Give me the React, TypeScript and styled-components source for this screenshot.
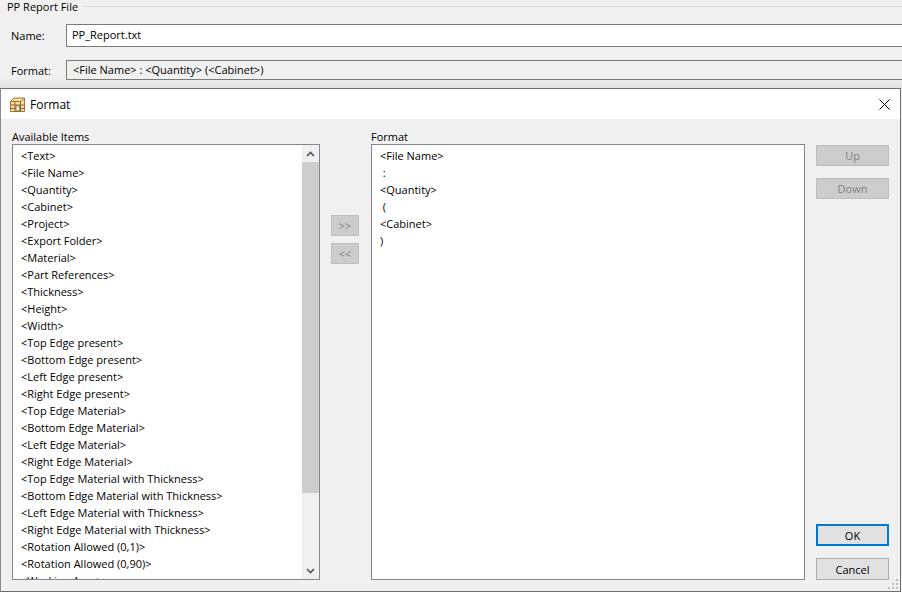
import { createGlobalStyle, styled } from "styled-components";

const GlobalStyle = createGlobalStyle`
  html, body {
    margin: 0;
    padding: 0;
    background: #f0f0f0;
    overflow: hidden;
  }
  body {
    font-family: "Open Sans", "Noto Sans", sans-serif;
    font-size: 11px;
    color: #000;
  }
`;

const Page = styled.div`
  width: 902px;
  height: 592px;
  display: flex;
  flex-direction: column;
  overflow: hidden;
`;

const Group = styled.div`
  height: 88px;
  flex: none;
  padding-left: 7px;
  box-sizing: border-box;
  background: linear-gradient(#f0f0f0 78px, #e2e2e2 88px);
`;

const GroupTitle = styled.div`
  display: flex;
  align-items: center;
  gap: 5px;
  height: 12px;
  &::after {
    content: "";
    flex: 1;
    border-top: 1px solid #dcdcdc;
  }
`;

const FieldRow = styled.div<{ $top: number }>`
  display: flex;
  align-items: center;
  margin-top: ${(p) => p.$top}px;
  padding-left: 4px;
`;

const FieldLabel = styled.label`
  width: 55px;
  flex: none;
`;

const NameInput = styled.div`
  flex: 1;
  height: 23px;
  line-height: 20px;
  box-sizing: border-box;
  padding-left: 5px;
  background: #fff;
  border: 1px solid #7a7a7a;
  border-right: none;
`;

const FormatInput = styled(NameInput)`
  height: 20px;
  line-height: 17px;
  padding-left: 6px;
  background: #f0f0f0;
`;

const Dialog = styled.div`
  flex: 1;
  min-height: 0;
  margin-right: 1px;
  position: relative;
  display: flex;
  flex-direction: column;
  background: #f0f0f0;
  border: 1px solid #6e6e6e;
  border-left-color: #8a8a8a;
`;

const TitleBar = styled.div`
  height: 30px;
  flex: none;
  display: flex;
  align-items: center;
  gap: 4px;
  padding-left: 8px;
  background: #fff;
  font-size: 12px;
`;

const CloseButton = styled.button`
  margin-left: auto;
  width: 30px;
  height: 30px;
  margin-right: 1px;
  padding: 0;
  border: none;
  background: none;
  display: flex;
  align-items: center;
  justify-content: center;
`;

const Body = styled.div`
  flex: 1;
  min-height: 0;
  display: flex;
  padding: 10px 12px 11px 11px;
`;

const ListColumn = styled.div<{ $width: number }>`
  width: ${(p) => p.$width}px;
  flex: none;
  display: flex;
  flex-direction: column;
`;

const ListLabel = styled.div`
  height: 15px;
  line-height: 15px;
`;

const ListBox = styled.div`
  flex: 1;
  min-height: 0;
  display: flex;
  background: #fff;
  border: 1px solid #828790;
  overflow: hidden;
`;

const Items = styled.div`
  flex: 1;
  min-width: 0;
  overflow: hidden;
  padding: 2px 0 0 8px;
`;

const Item = styled.div`
  height: 17px;
  line-height: 17px;
  white-space: nowrap;
`;

const ScrollBar = styled.div`
  width: 17px;
  flex: none;
  display: flex;
  flex-direction: column;
  background: #f0f0f0;
`;

const ScrollArrow = styled.div`
  height: 17px;
  flex: none;
  display: flex;
  align-items: center;
  justify-content: center;
`;

const ScrollTrack = styled.div`
  flex: 1;
  min-height: 0;
`;

const ScrollThumb = styled.div`
  height: 331px;
  background: #cdcdcd;
`;

const MoveColumn = styled.div`
  width: 28px;
  flex: none;
  margin: 0 12px 0 11px;
  padding-top: 86px;
  display: flex;
  flex-direction: column;
  gap: 7px;
`;

const SideColumn = styled.div`
  width: 73px;
  flex: none;
  margin-left: 11px;
  padding-top: 16px;
  display: flex;
  flex-direction: column;
`;

const PushButton = styled.button<{ $default?: boolean; $tall?: boolean }>`
  width: 100%;
  height: ${(p) => (p.$tall ? 22 : 21)}px;
  flex: none;
  padding: 0;
  box-sizing: border-box;
  font: inherit;
  color: #000;
  background: #e1e1e1;
  border: ${(p) => (p.$default ? "2px solid #0078d7" : "1px solid #adadad")};
`;

const DisabledButton = styled(PushButton).attrs({ disabled: true })`
  color: #838383;
  background: #cccccc;
  border: 1px solid #bfbfbf;
`;

const Spacer = styled.div<{ $size?: number }>`
  flex: ${(p) => (p.$size ? "none" : 1)};
  height: ${(p) => p.$size ?? 0}px;
`;

const Grip = styled.svg`
  position: absolute;
  right: 1px;
  bottom: 1px;
`;

const available = [
  "<Text>",
  "<File Name>",
  "<Quantity>",
  "<Cabinet>",
  "<Project>",
  "<Export Folder>",
  "<Material>",
  "<Part References>",
  "<Thickness>",
  "<Height>",
  "<Width>",
  "<Top Edge present>",
  "<Bottom Edge present>",
  "<Left Edge present>",
  "<Right Edge present>",
  "<Top Edge Material>",
  "<Bottom Edge Material>",
  "<Left Edge Material>",
  "<Right Edge Material>",
  "<Top Edge Material with Thickness>",
  "<Bottom Edge Material with Thickness>",
  "<Left Edge Material with Thickness>",
  "<Right Edge Material with Thickness>",
  "<Rotation Allowed (0,1)>",
  "<Rotation Allowed (0,90)>",
  "<Working Area>",
];

const selected = ["<File Name>", " :", "<Quantity>", " (", "<Cabinet>", ")"];

const PreItem = styled(Item)`
  white-space: pre;
`;

function TableIcon() {
  return (
    <svg width="17" height="17" viewBox="0 0 17 17">
      <path d="M1.5 5.5 L5 2 H15.5 V15.5 H1.5 Z" fill="#f6dc9a" stroke="#a8733a" />
      <path d="M1.5 5.5 H12 L15.5 2" fill="none" stroke="#a8733a" />
      <path d="M1.5 9 H15.5 M1.5 12.5 H15.5 M6 5.5 V15.5 M11.5 5.5 V15.5" stroke="#8f6a3a" />
      <rect x="7" y="10" width="3.5" height="5" fill="#fff4cf" stroke="#6e5a36" strokeWidth="0.7" />
    </svg>
  );
}

export default function App() {
  return (
    <Page>
      <GlobalStyle />
      <Group>
        <GroupTitle>PP Report File</GroupTitle>
        <FieldRow $top={12}>
          <FieldLabel>Name:</FieldLabel>
          <NameInput>PP_Report.txt</NameInput>
        </FieldRow>
        <FieldRow $top={13}>
          <FieldLabel>Format:</FieldLabel>
          <FormatInput>{"<File Name> : <Quantity> (<Cabinet>)"}</FormatInput>
        </FieldRow>
      </Group>
      <Dialog>
        <TitleBar>
          <TableIcon />
          Format
          <CloseButton aria-label="Close">
            <svg width="11" height="11" viewBox="0 0 11 11">
              <path d="M0.5 0.5 L10.5 10.5 M10.5 0.5 L0.5 10.5" stroke="#000" strokeWidth="1" />
            </svg>
          </CloseButton>
        </TitleBar>
        <Body>
          <ListColumn $width={308}>
            <ListLabel>Available Items</ListLabel>
            <ListBox>
              <Items>
                {available.map((item) => (
                  <Item key={item}>{item}</Item>
                ))}
              </Items>
              <ScrollBar>
                <ScrollArrow>
                  <svg width="9" height="6" viewBox="0 0 9 6">
                    <path d="M1 5 L4.5 1.5 L8 5" fill="none" stroke="#505050" strokeWidth="1.6" />
                  </svg>
                </ScrollArrow>
                <ScrollTrack>
                  <ScrollThumb />
                </ScrollTrack>
                <ScrollArrow>
                  <svg width="9" height="6" viewBox="0 0 9 6">
                    <path d="M1 1 L4.5 4.5 L8 1" fill="none" stroke="#505050" strokeWidth="1.6" />
                  </svg>
                </ScrollArrow>
              </ScrollBar>
            </ListBox>
          </ListColumn>
          <MoveColumn>
            <DisabledButton>{">>"}</DisabledButton>
            <DisabledButton>{"<<"}</DisabledButton>
          </MoveColumn>
          <ListColumn $width={434}>
            <ListLabel>Format</ListLabel>
            <ListBox>
              <Items>
                {selected.map((item) => (
                  <PreItem key={item}>{item}</PreItem>
                ))}
              </Items>
            </ListBox>
          </ListColumn>
          <SideColumn>
            <DisabledButton>Up</DisabledButton>
            <Spacer $size={12} />
            <DisabledButton>Down</DisabledButton>
            <Spacer />
            <PushButton $default $tall>OK</PushButton>
            <Spacer $size={12} />
            <PushButton $tall>Cancel</PushButton>
          </SideColumn>
        </Body>
        <Grip width="11" height="11" viewBox="0 0 11 11">
          <path d="M8 0h2v2H8zM4 4h2v2H4zM8 4h2v2H8zM0 8h2v2H0zM4 8h2v2H4zM8 8h2v2H8z" fill="#bdbdbd" />
        </Grip>
      </Dialog>
    </Page>
  );
}
